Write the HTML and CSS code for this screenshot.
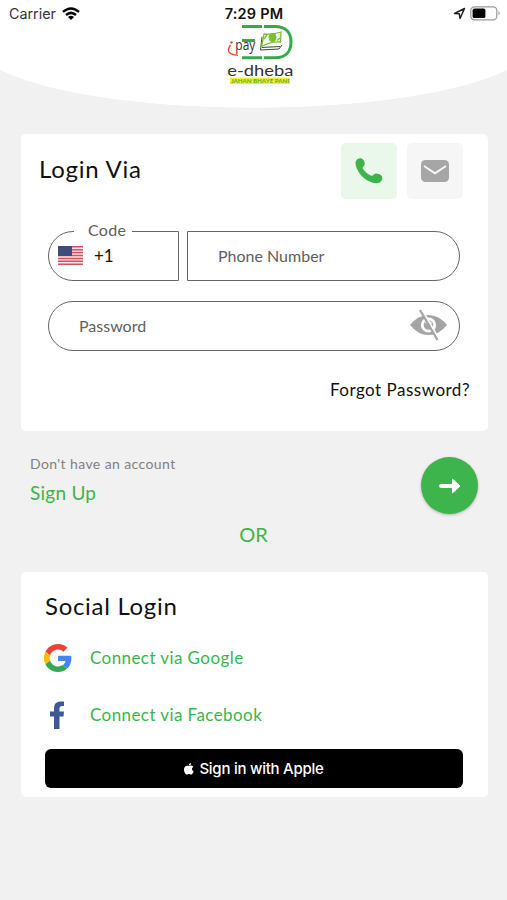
FILE: index.html
```html
<!DOCTYPE html>
<html lang="en">
<head>
<meta charset="utf-8">
<title>e-dheba Login</title>
<link rel="stylesheet" href="styles.css">
</head>
<body>
<header class="header">
  <div class="status">
    <div class="carrier"><span class="carrier-name">Carrier</span>
      <svg width="18" height="13" viewBox="0 0 18 13" fill="none" stroke="#000" stroke-width="2.5"><path d="M1 4.9Q9-2 17 4.9M4 8Q9 3.7 14 8"/><path d="M9 13 6 10Q9 7.6 12 10Z" fill="#000" stroke="none"/></svg>
    </div>
    <div class="time">7:29 PM</div>
    <div class="power">
      <svg width="13" height="13" viewBox="0 0 13 13" fill="none" stroke="#222" stroke-width="1.5" stroke-linejoin="round"><path d="M1.5 6.5 11.5 1.5 7 11.5 6.3 6.8Z"/></svg>
      <svg width="31" height="15" viewBox="0 0 31 15"><rect x=".8" y=".8" width="26" height="13" rx="3.6" fill="#fff" stroke="#999" stroke-width="1.2"/><rect x="2.6" y="2.6" width="12.8" height="9.4" rx="1.6"/><path d="M28.5 5Q31 7.3 28.5 9.6Z" fill="#999"/></svg>
    </div>
  </div>
  <svg class="logo" width="72" height="64" viewBox="0 0 72 64">
    <g fill="none" stroke="#35aa4b" stroke-width="3"><path d="M17 4.5H37M39 4.5H50C61 4.5 66 11 66 20S61 35.8 50 35.8H39M37 35.8H17M17 18.5H30"/></g>
    <path d="M5.5 23C1.5 29 3 32.5 13 33.2" fill="none" stroke="#e4502e" stroke-width="1.4"/><circle cx="6.5" cy="20.5" r="1.2" fill="#e4502e"/>
    <text class="logo-pay" x="10.3" y="27.5" textLength="20" lengthAdjust="spacingAndGlyphs">pay</text>
    <path d="M37 15 35.5 28 54 27 57 23" fill="#fff" stroke="#3a4930" stroke-width="1"/><path d="M37 25.5 55 24.5" stroke="#3a4930" stroke-width="1"/>
    <path d="M39 12Q46 13 56 10L55.5 20Q46 19 36.5 24.5Z" fill="#f8fff0" stroke="#7abf35" stroke-width="1.3"/><ellipse cx="47.5" cy="15.5" rx="4" ry="4.5" fill="#7abf35"/><path d="M39 17 42 13M52 18.5 55 16" stroke="#7abf35" stroke-width="1.3"/>
    <text class="logo-name" x="2.3" y="54" textLength="66" lengthAdjust="spacingAndGlyphs">e-dheba</text>
    <path d="M5 55.8H65V62H5Z" fill="#f5ee27"/>
    <text class="logo-tag" x="6" y="61.2" textLength="58" lengthAdjust="spacingAndGlyphs">JAHAN BHAYE PANI</text>
  </svg>
</header>
<main>
  <section class="card login">
    <div class="login-head">
      <h1>Login Via</h1>
      <div class="tabs">
        <div class="tab active"><svg width="28" height="26" viewBox="0 0 28 26"><path d="M1 3C2 .8 5-.4 7 .7 9 1.8 10 4.5 9.8 6.3 9.6 8 7.8 8.5 7.5 9.6 8 12.5 13.8 17.6 17 17.8 18.3 17.6 18.7 15.8 20.5 15.5 22.5 15.3 26 16.6 27 18.4 28 20.6 26.5 23.6 24.5 24.6 20 26.5 12.3 23.6 7.5 18.8 3 14.3-.8 7 1 3Z" fill="#3bb54a"/></svg></div>
        <div class="tab"><svg width="28" height="22" viewBox="0 0 28 22"><rect width="28" height="22" rx="4.5" fill="#a6a6a6"/><path d="M3 6 14 13.3 25 6" fill="none" stroke="#fafafa" stroke-width="1.8"/></svg></div>
      </div>
    </div>
    <div class="phone-row">
      <div class="field code"><span class="code-label">Code</span>
        <svg width="25" height="19" viewBox="0 0 25 19"><path fill="#f4e5e8" d="M0 0H25V19H0Z"/><path d="M0 .8H25M0 3.7H25M0 6.6H25M0 9.5H25M0 12.4H25M0 15.3H25M0 18.2H25" stroke="#d4535f" stroke-width="1.5"/><path fill="#3f4b7a" d="M0 0H14V10H0Z"/></svg>
        <span class="code-value">+1</span>
      </div>
      <div class="field number"><span>Phone Number</span></div>
    </div>
    <div class="field password"><span>Password</span>
      <svg width="38" height="32" viewBox="0 0 38 32"><path d="M0 16Q8 6 18.5 6T37 16Q29 26 18.5 26T0 16Z" fill="#a4a4a4"/><circle cx="18.5" cy="16" r="6.2" fill="#a4a4a4" stroke="#fff" stroke-width="2.8"/><path d="M15.5 14Q18.5 11.5 22 14.5" fill="none" stroke="#fff" stroke-width="1.5"/><path d="M12 1 29.5 31" stroke="#fff" stroke-width="2"/><path d="M10 1 27.5 31" stroke="#a4a4a4" stroke-width="2.3"/></svg>
    </div>
    <div class="forgot"><span>Forgot Password?</span></div>
  </section>
  <section class="account">
    <div><p class="hint"><span>Don't have an account</span></p><p class="signup"><span>Sign Up</span></p></div>
    <div class="go"><svg width="22" height="16" viewBox="0 0 22 16"><path d="M2.2 8H15" stroke="#fff" stroke-width="4.2" stroke-linecap="round"/><path d="M13.5 1 21 8 13.5 15Z" fill="#fff" stroke="#fff" stroke-linejoin="round"/></svg></div>
  </section>
  <div class="or"><span>OR</span></div>
  <section class="card social">
    <h2><span>Social Login</span></h2>
    <div class="connect"><svg width="28" height="28" viewBox="0 0 48 48"><path fill="#ea4335" d="M24 9.5c3.54 0 6.71 1.22 9.21 3.6l6.85-6.85C35.9 2.38 30.47 0 24 0 14.62 0 6.51 5.38 2.56 13.22l7.98 6.19C12.43 13.72 17.74 9.5 24 9.5z"/><path fill="#4285f4" d="M46.98 24.55c0-1.57-.15-3.09-.38-4.55H24v9.02h12.94c-.58 2.96-2.26 5.48-4.78 7.18l7.73 6c4.51-4.18 7.09-10.36 7.09-17.65z"/><path fill="#fbbc05" d="M10.53 28.59c-.48-1.45-.76-2.99-.76-4.59s.27-3.14.76-4.59l-7.98-6.19C.92 16.46 0 20.12 0 24s.92 7.54 2.56 10.78l7.97-6.19z"/><path fill="#34a853" d="M24 48c6.48 0 11.93-2.13 15.89-5.81l-7.73-6c-2.15 1.45-4.92 2.3-8.16 2.3-6.26 0-11.57-4.22-13.47-9.91l-7.98 6.19C6.51 42.62 14.62 48 24 48z"/></svg><span>Connect via Google</span></div>
    <div class="connect"><svg width="28" height="28" viewBox="0 0 28 28"><path fill="#3d5a98" d="M10 28V15.5H6V10.5H10V7Q10 .5 16.5 .5H20V5H18Q15.5 5 15.5 7.5V10.5H20L19.5 15.5H15.5V28Z"/></svg><span>Connect via Facebook</span></div>
    <div class="apple"><svg width="10" height="12" viewBox="0 0 11 13" fill="#fff"><path d="M5.5 3.3C7 2.6 8.6 2.3 10.3 4 8.2 5.3 8.4 8 10.7 9 9.5 12.3 8.4 13.1 7 12.5 6 12 5 12 4 12.5 2 13.3 0 10 0 7 0 3.4 2.8 2 5.5 3.3ZM5.3 2.7Q5.3.5 7.8 0 8 2.5 5.3 2.7Z"/></svg><span>Sign in with Apple</span></div>
  </section>
</main>
</body>
</html>
```
FILE: styles.css
```css
* { box-sizing: border-box; }
body { margin: 0; width: 507px; height: 900px; overflow: hidden; background: #f1f1f1; color: #111; font-family: Lato, sans-serif; }
h1, h2, p { margin: 0; font-weight: 400; }
svg { display: block; flex-shrink: 0; }
span { white-space: nowrap; }
.header { height: 108px; background: linear-gradient(#fff, #fff) top / 100% 43px no-repeat, radial-gradient(280px 65px at 50% 43px, #fff 99%, transparent 100%); }
.status { display: grid; grid-template-columns: 1fr auto 1fr; align-items: center; height: 22px; padding: 5px 6px 0 9px; font: 15px/17px Inter, sans-serif; }
.carrier, .power { display: flex; align-items: center; gap: 6px; }
.power { justify-content: flex-end; gap: 4px; }
.carrier-name { font-size: 14.3px; color: #333; }
.time { font-weight: 600; font-size: 14.5px; letter-spacing: .2px; position: relative; left: -1px; }
.logo { margin: 0 auto; position: relative; left: 7px; }
.logo-pay { font: 15px "Open Sans", sans-serif; fill: #333; }
.logo-name { font: 16px Lato, sans-serif; fill: #333; }
.logo-tag { font: bold 6px Lato, sans-serif; fill: #50a954; }
.card { width: 467px; margin-left: 21px; background: #fff; border-radius: 5px; }
.login { height: 297px; margin-top: 26px; padding-top: 9px; }
.login-head { display: flex; justify-content: space-between; padding: 0 25px 0 18px; }
h1 { font-size: 24px; line-height: 29px; margin-top: 11px; letter-spacing: .75px; }
.tabs { display: flex; gap: 10px; }
.tab { width: 56px; height: 56px; border-radius: 5px; display: flex; align-items: center; justify-content: center; background: #f6f6f6; }
.active { background: #eaf7eb; }
.phone-row { display: flex; gap: 8px; margin: 32px 28px 0 27px; }
.field { display: flex; align-items: center; height: 50px; border: 1.4px solid #666; color: #606060; font-size: 16px; letter-spacing: 0; padding-bottom: 2px; }
.code { position: relative; width: 131px; border-radius: 25px 0 0 25px; padding-left: 9px; gap: 11px; }
.code-label { position: absolute; left: 25px; top: -12px; padding: 0 6px 0 14px; background: #fff; line-height: 20px; letter-spacing: .3px; }
.code-value { color: #111; font-size: 17px; }
.number { width: 273px; border-radius: 0 25px 25px 0; padding-left: 30px; }
.password { width: 412px; margin: 20px 0 0 27px; border-radius: 25px; padding: 0 11px 2px 30px; justify-content: space-between; }
.forgot { text-align: right; margin: 28px 18px 0; font-size: 17px; line-height: 22px; letter-spacing: .5px; }
.account { display: flex; justify-content: space-between; height: 92px; padding: 23px 29px 0 30px; }
.hint { color: #808080; font-size: 14px; line-height: 20px; letter-spacing: .4px; }
.signup { color: #3bb54a; font-size: 19px; line-height: 24px; margin-top: 7px; letter-spacing: .25px; }
.go { width: 57px; height: 57px; margin-top: 3px; border-radius: 50%; background: #3eb44d; display: flex; align-items: center; justify-content: center; box-shadow: 0 1px 3px #0004; }
.or { color: #3bb54a; text-align: center; font-size: 20px; line-height: 24px; position: relative; top: -1px; }
.social { height: 225px; margin-top: 25px; padding: 19px 25px 0 24px; }
h2 { font-size: 24px; line-height: 29px; letter-spacing: .7px; }
.connect { display: flex; align-items: center; gap: 18px; height: 28px; margin: 24px 0 0 -1px; color: #3bb54a; font-size: 17px; letter-spacing: .42px; }
.connect span { position: relative; top: -1px; }
.connect + .connect { margin-top: 29px; }
.apple { height: 39px; margin-top: 20px; border-radius: 6px; background: #000; color: #fff; display: flex; align-items: center; justify-content: center; gap: 5px; font: 500 15px Inter, sans-serif; letter-spacing: -.25px; }
```
